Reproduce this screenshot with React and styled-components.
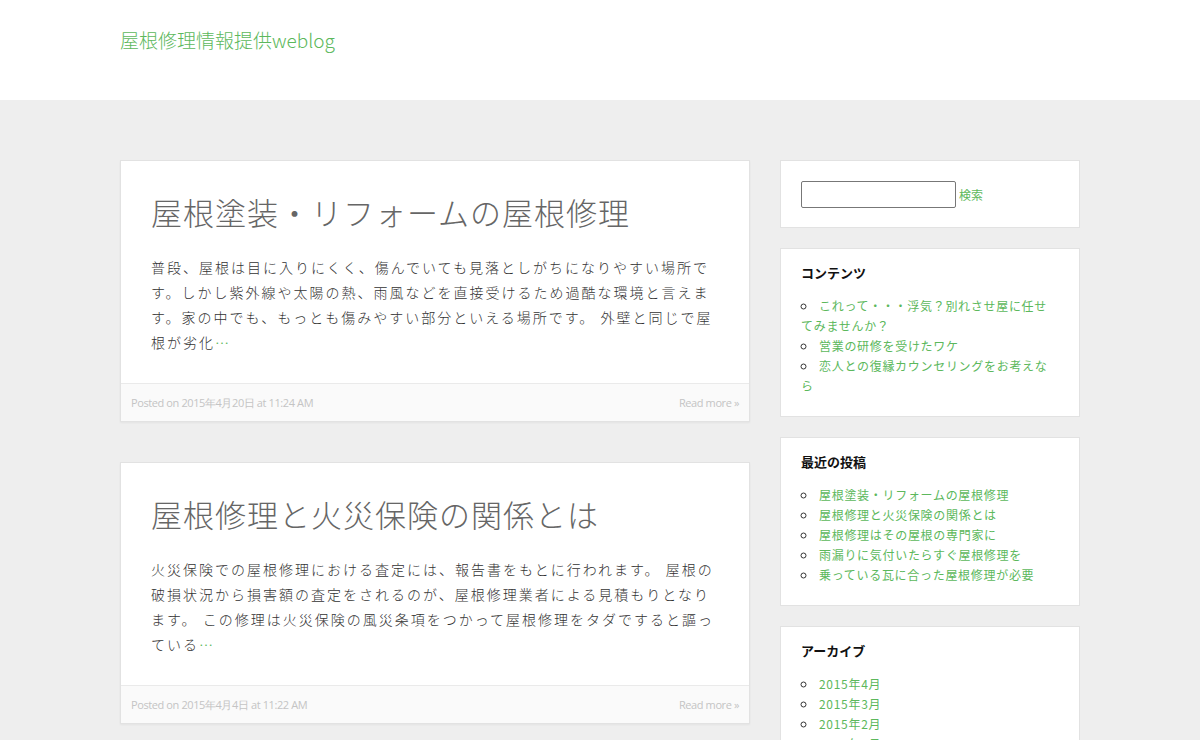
import React from "react";
import styled, { createGlobalStyle } from "styled-components";

const G = createGlobalStyle`
  body { margin:0; background:#eeeeee; font-family: "Noto Sans CJK JP", "Open Sans", sans-serif; }
  a { text-decoration:none; color:#5cb85c; }
`;
const Header = styled.header`background:#fff;height:100px;`;
const Wrap = styled.div`width:960px;margin:0 auto;`;
const SiteTitle = styled.a`display:block;padding-top:26px;font-size:19px;font-weight:300;color:#5cb85c;`;
const Layout = styled.div`width:960px;margin:60px auto 0;display:flex;gap:30px;align-items:flex-start;`;
const Main = styled.main`width:630px;display:flex;flex-direction:column;gap:40px;`;
const Card = styled.article`background:#fff;border:1px solid #e2e2e2;box-shadow:0 1px 2px rgba(0,0,0,.05);`;
const Body = styled.div`padding:28px 30px 28px;`;
const Title = styled.h2`margin:0 0 20px;font-size:31px;font-weight:300;color:#666;line-height:46px;letter-spacing:1px;`;
const Text = styled.p`margin:0;font-size:14px;line-height:25px;color:#333;letter-spacing:2px;font-weight:300;`;
const Foot = styled.div`background:#fafafa;border-top:1px solid #eaeaea;height:37px;padding:0 10px;display:flex;justify-content:space-between;align-items:center;font-family:"Open Sans",sans-serif;font-size:11px;color:#c4c4c4;letter-spacing:-0.4px;`;
const Side = styled.aside`width:300px;display:flex;flex-direction:column;gap:20px;`;
const Widget = styled.section`background:#fff;border:1px solid #e2e2e2;padding:${p=>p.$pad||"14px 20px 20px"};`;
const WTitle = styled.h3`margin:0 0 14px;font-size:13px;font-weight:700;color:#111;`;
const List = styled.ul`margin:0;padding:0;list-style:circle inside;font-size:12px;line-height:20px;letter-spacing:0.7px;color:#333;`;
const Item = styled.li`& a{margin-left:0;}`;
const Search = styled.div`display:flex;align-items:center;gap:3px;font-size:12px;`;
const Input = styled.input`width:155px;height:27px;box-sizing:border-box;border:1px solid #777;border-radius:2px;`;

const posts = [
  {t:"屋根塗装・リフォームの屋根修理",b:"普段、屋根は目に入りにくく、傷んでいても見落としがちになりやすい場所です。しかし紫外線や太陽の熱、雨風などを直接受けるため過酷な環境と言えます。家の中でも、もっとも傷みやすい部分といえる場所です。 外壁と同じで屋根が劣化",d:"2015年4月20日 at 11:24 AM"},
  {t:"屋根修理と火災保険の関係とは",b:"火災保険での屋根修理における査定には、報告書をもとに行われます。 屋根の破損状況から損害額の査定をされるのが、屋根修理業者による見積もりとなります。 この修理は火災保険の風災条項をつかって屋根修理をタダですると謳っている",d:"2015年4月4日 at 11:22 AM"},
];

export default function App(){
  return <>
    <G/>
    <Header><Wrap><SiteTitle href="#">屋根修理情報提供weblog</SiteTitle></Wrap></Header>
    <Layout>
      <Main>
        {posts.map(p=><Card key={p.t}>
          <Body><Title>{p.t}</Title><Text>{p.b}<a href="#">…</a></Text></Body>
          <Foot><span>Posted on {p.d}</span><span>Read more »</span></Foot>
        </Card>)}
      </Main>
      <Side>
        <Widget $pad="20px 20px 19px"><Search><Input/><a href="#">検索</a></Search></Widget>
        <Widget><WTitle>コンテンツ</WTitle><List>
          {["これって・・・浮気？別れさせ屋に任せてみませんか？","営業の研修を受けたワケ","恋人との復縁カウンセリングをお考えなら"].map(x=><Item key={x}><a href="#">{x}</a></Item>)}
        </List></Widget>
        <Widget><WTitle>最近の投稿</WTitle><List>
          {["屋根塗装・リフォームの屋根修理","屋根修理と火災保険の関係とは","屋根修理はその屋根の専門家に","雨漏りに気付いたらすぐ屋根修理を","乗っている瓦に合った屋根修理が必要"].map(x=><Item key={x}><a href="#">{x}</a></Item>)}
        </List></Widget>
        <Widget><WTitle>アーカイブ</WTitle><List>
          {["2015年4月","2015年3月","2015年2月","2015年1月"].map(x=><Item key={x}><a href="#">{x}</a></Item>)}
        </List></Widget>
      </Side>
    </Layout>
  </>;
}
